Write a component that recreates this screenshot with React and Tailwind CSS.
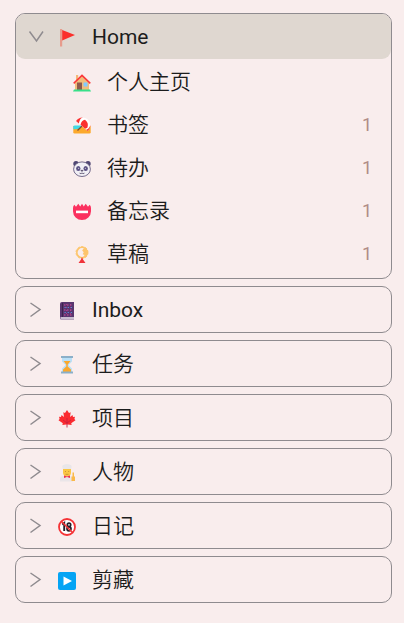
import { useState } from "react";

const Flag = () => (
  <svg viewBox="0 0 18 18" className="size-full">
    <path d="M2 0h2.200v17.500H2z" fill="#e79b8c" />
    <path d="M4.200 1v10.500L17 6z" fill="#fb2f2b" />
  </svg>
);

const House = () => (
  <svg viewBox="0 0 18 18" className="size-full">
    <path d="M3 1h2.200v6H3z" fill="#f2b877" />
    <path d="M9 2l7 7v7H2V9z" fill="#f2bd7b" />
    <path d="M4 8.500h5V16H4z" fill="#8d5a4c" />
    <path d="M10.500 8.500h4v4h-4z" fill="#83cbff" />
    <path d="M.7 9.400L9 1.400l8.300 8" fill="none" stroke="#fb3638" strokeWidth="1.500" />
    <path d="M1 15.500h16l1 2H0z" fill="#38e08a" />
  </svg>
);

const Beach = () => (
  <svg viewBox="0 0 18 18" className="size-full">
    <path d="M.3 9h17.400v6.200q0 1.300-1.300 1.300H1.600Q.3 16.500.3 15.200z" fill="#fca92c" />
    <path d="M.3 9.500Q.3 8.500 1.800 8.500h8l-3 3q-3 1-6.500.8z" fill="#3fd9e6" />
    <path d="M10 8L4.500 13.500" stroke="#7a4a38" strokeWidth="1.300" />
    <path d="M3 4Q5.500.3 10 .5q6.500.8 7.300 7 .2 4.500-2.800 6.500z" fill="#fff" />
    <path d="M3 4Q5.500.3 10 .5 7 .8 5.800 6.400z" fill="#fb3030" />
    <path d="M7.500 7.800q1-4.500 4.500-5Q16 6 14.500 10.500q-1 1-2.500 1.200z" fill="#fb3030" />
    <path d="M17.300 7.500q.2 4.500-2.800 6.500l-1.300-1.200Q17 11.500 17.300 7.500z" fill="#fb3030" />
  </svg>
);

const Panda = () => (
  <svg viewBox="0 0 18 18" className="size-full">
    <circle cx="3" cy="3.800" r="2.700" fill="#4f4673" />
    <circle cx="15" cy="3.800" r="2.700" fill="#4f4673" />
    <ellipse cx="9" cy="9.200" rx="8.400" ry="7.300" fill="#f1eff5" stroke="#655c80" strokeWidth=".9" />
    <ellipse cx="5.300" cy="8.500" rx="2.200" ry="2.500" fill="#5b5184" />
    <ellipse cx="12.700" cy="8.500" rx="2.200" ry="2.500" fill="#5b5184" />
    <circle cx="5.700" cy="8.300" r=".5" fill="#fff" />
    <circle cx="12.300" cy="8.300" r=".5" fill="#fff" />
    <path d="M7.800 10.300h2.400L9 11.600zM6.500 13q1.300 1 2.500 0 1.200 1 2.500 0" fill="#403858" stroke="#403858" strokeWidth=".5" />
  </svg>
);

const Badge = () => (
  <svg viewBox="0 0 18 18" className="size-full">
    <path d="M0 5q0-2 1.300-3.200L3 3.800 5.300.8 7.200 3.500 9 .8l1.800 2.700L12.700.8 15 3.800l1.700-2Q18 3 18 5v3.200a9 8.800 0 0 1-18 0z" fill="#fb315f" />
    <path d="M3 7.600h12v2.600H3z" fill="#fff" />
  </svg>
);

const Wreath = () => (
  <svg viewBox="0 0 18 18" className="size-full">
    <circle cx="9" cy="6.500" r="5.200" fill="none" stroke="#fdc56c" strokeWidth="1.600" />
    <circle cx="9" cy="6.500" r="6" fill="none" stroke="#fdc56c" strokeDasharray="2.400 1.400" />
    <path d="M10.500 2.500l-1.300 2 1.500 1.800-1 2 2 .7-1.700 2.200 3.500-2.200 1.500-3-1.500-3.500z" fill="#fdc56c" />
    <path d="M9 11l1 2.500 2.500 3.500h-7L8 13.500z" fill="#f0333a" />
  </svg>
);

const Notebook = () => (
  <svg viewBox="0 0 18 18" className="size-full">
    <path d="M2 2Q2 0 4 0h12v17.500H3.500Q2 17.500 2 16z" fill="#59366f" />
    <path d="M2.500 15H16v2.500H3.500q-1 0-1-1z" fill="#c9bdd0" />
    <path d="M4.500 1v14" stroke="#3c244d" />
    <path d="M6 3h9M6 8h9M6 13h9" stroke="#d64a95" strokeDasharray="1.500 1.500" />
    <path d="M6.500 5.500H15M6.500 10.500H15" stroke="#588bd8" strokeDasharray="1.300 1.800" />
    <path d="M8.500 2v12M12.500 2v12" stroke="#b04499" strokeWidth=".8" strokeDasharray="1 2" />
  </svg>
);

const Hourglass = () => (
  <svg viewBox="0 0 18 18" className="size-full">
    <path d="M4 2h10v3.500L10.500 9 14 12.500V16H4v-3.500L7.500 9 4 5.500z" fill="#b9e0f8" />
    <path d="M5.500 5h7L9.700 8.500v2L13 13.500V16H5v-2.500l3.300-3v-2z" fill="#fba82d" />
    <path d="M3 0h12v2H3zM3 15.500h12v2H3z" fill="#8bafc8" />
  </svg>
);

const Maple = () => (
  <svg viewBox="0 0 18 18" className="size-full">
    <path d="M9 0l2 3 1.700-.7L12 7l2.500-2 .5 2 2-.2-.6 2.200 1.100 1.200-4.300 3 .5 1.800-4-.6h-1.400l-4 .6.500-1.800-4.300-3L1.600 9 1 6.800l2 .2.500-2L6 7l-.7-4.700L7 3z" fill="#fb2b30" />
    <path d="M9 8v9.500M9 13l-4-3M9 13l4-3" fill="none" stroke="#c81f40" strokeWidth=".9" />
  </svg>
);

const Cook = () => (
  <svg viewBox="0 0 18 18" className="size-full">
    <path d="M2 17.500V15q0-2.500 3-3h7q3 .5 3 3v2.500z" fill="#eae5e8" />
    <path d="M5 4.500h8V9q-.5 3.500-4 3.500T5 9z" fill="#fbc744" />
    <path d="M5 5q-2-4 1.500-4.500 2.500-1 5 0Q15 1 13 5z" fill="#e9e6e9" />
    <path d="M7 7.500h1M10.200 7.500h1M7.500 10.300h3" stroke="#a8742c" strokeWidth=".6" />
    <path d="M6 11.500l3 1 3-1V14l-3-1-3 1z" fill="#ee3050" />
    <path d="M14.500 8.500h1.500v4h-1.500zM13.500 12.500H17V17h-3.500z" fill="#fbb949" />
  </svg>
);

const Adult = () => (
  <svg viewBox="0 0 18 18" className="size-full">
    <circle cx="9" cy="9" r="8" fill="#fff" />
    <path d="M4.200 6.500L6.200 5v8" fill="none" stroke="#25202a" strokeWidth="1.900" />
    <circle cx="11" cy="6.800" r="1.700" fill="none" stroke="#25202a" strokeWidth="1.700" />
    <circle cx="11" cy="10.800" r="2" fill="none" stroke="#25202a" strokeWidth="1.700" />
    <circle cx="9" cy="9" r="8" fill="none" stroke="#f53336" strokeWidth="1.800" />
    <path d="M3.500 3.500l11 11" stroke="#f53336" strokeWidth="1.600" />
  </svg>
);

const Play = () => (
  <svg viewBox="0 0 18 18" className="size-full">
    <rect width="18" height="18" rx="2" fill="#05a4f4" />
    <path d="M5.500 4.500v9l8.500-4.500z" fill="#fff" />
  </svg>
);

const homePages = [
  { name: "个人主页", icon: House },
  { name: "书签", icon: Beach, count: 1 },
  { name: "待办", icon: Panda, count: 1 },
  { name: "备忘录", icon: Badge, count: 1 },
  { name: "草稿", icon: Wreath, count: 1 },
];

const folders = [
  { name: "Home", icon: Flag, pages: homePages, latin: true },
  { name: "Inbox", icon: Notebook, latin: true },
  { name: "任务", icon: Hourglass },
  { name: "项目", icon: Maple },
  { name: "人物", icon: Cook },
  { name: "日记", icon: Adult },
  { name: "剪藏", icon: Play },
];

function Folder({ folder }) {
  const [open, setOpen] = useState(Boolean(folder.pages));
  const Icon = folder.icon;

  return (
    <section className="rounded-[10px] border border-[#8f8b8f]">
      <button
        type="button"
        aria-expanded={open}
        onClick={() => setOpen(!open)}
        className={`flex h-[45px] w-full items-center rounded-[9px] pl-3 text-left ${
          open ? "bg-[#dfd7d0]" : ""
        }`}
      >
        <svg
          viewBox="0 0 16 16"
          className={`size-4 text-[#8f8b8f] ${open ? "rotate-90" : ""}`}
          fill="none"
          stroke="currentColor"
          strokeWidth="1.500"
        >
          <path d="M2.500 1l9.500 6.500L2.500 14.500" />
        </svg>
        <span className="mt-0.5 ml-3.5 size-[18px] shrink-0">
          <Icon />
        </span>
        {/* latin names need the regular weight to look even with the chinese ones */}
        <span className={`ml-4 ${folder.latin ? "font-normal" : ""}`}>{folder.name}</span>
      </button>

      {open && folder.pages && (
        <ul className="pt-px pb-[3px]">
          {folder.pages.map((page) => (
            <li key={page.name}>
              <a href="#" className="flex h-[43px] items-center pr-[19px] pl-[57px]">
                <span className="mt-[3px] size-[18px] shrink-0">
                  <page.icon />
                </span>
                <span className="ml-4 flex-1">{page.name}</span>
                {page.count && (
                  <span className="text-lg font-normal text-[#b08c86]">{page.count}</span>
                )}
              </a>
            </li>
          ))}
        </ul>
      )}
    </section>
  );
}

function App() {
  return (
    <nav className="flex min-h-screen flex-col gap-[7px] bg-[#f9eded] pt-[13px] pr-3 pb-5 pl-[15px] font-[Roboto,'Noto_Sans_CJK_SC',sans-serif] text-[21px] leading-7 font-[350] text-[#1c1c1c]">
      {folders.map((folder) => (
        <Folder key={folder.name} folder={folder} />
      ))}
    </nav>
  );
}

export default App;
